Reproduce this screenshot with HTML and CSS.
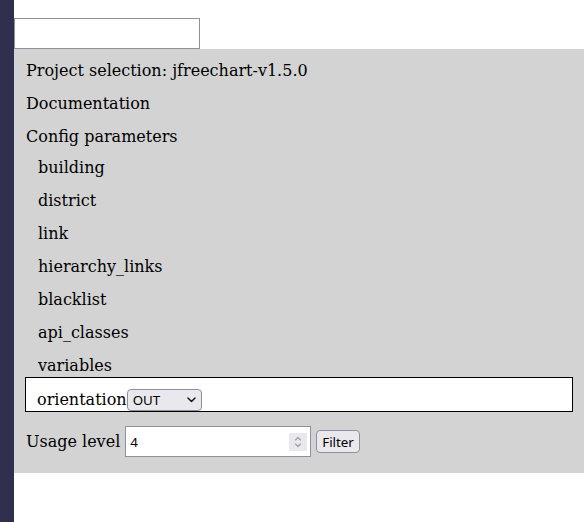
FILE: index.html
```html
<!DOCTYPE html>
<html>
<head>
<meta charset="utf-8">
<link rel="stylesheet" href="styles.css">
</head>
<body>
<div class="layout">
  <div class="sidebar"></div>
  <div class="main">
    <input class="search field" type="text">
    <div class="panel">
      <div class="item">Project selection: jfreechart-v1.5.0</div>
      <div class="item">Documentation</div>
      <div class="item header">Config parameters</div>
      <div class="sub">building</div>
      <div class="sub">district</div>
      <div class="sub">link</div>
      <div class="sub">hierarchy_links</div>
      <div class="sub">blacklist</div>
      <div class="sub">api_classes</div>
      <div class="sub">variables</div>
      <div class="box"><span class="label">orientation</span><span class="select-wrap"><select class="orient"><option>OUT</option><option>IN</option><option>BOTH</option></select><svg class="chev" width="9" height="6" viewBox="0 0 9 6" aria-hidden="true"><path d="M1 1 L4.5 4.5 L8 1" fill="none" stroke="#1a1a1a" stroke-width="1.5" stroke-linecap="round" stroke-linejoin="round"/></svg></span></div>
      <div class="usage"><span class="label">Usage level</span><span class="num-wrap"><input class="level field" type="text" value="4"><span class="spin" aria-hidden="true"><svg width="18" height="18" viewBox="0 0 18 18"><path d="M6.5 7 L9 4.5 L11.5 7" fill="none" stroke="#9a9aa4" stroke-width="1.1" stroke-linecap="round" stroke-linejoin="round"/><path d="M6.5 11 L9 13.5 L11.5 11" fill="none" stroke="#9a9aa4" stroke-width="1.1" stroke-linecap="round" stroke-linejoin="round"/></svg></span></span><button class="filter">Filter</button></div>
    </div>
  </div>
</div>
</body>
</html>
```
FILE: styles.css
```css
html, body {
  margin: 0;
  padding: 0;
  height: 100%;
}
body {
  font-family: "DejaVu Serif", serif;
  font-size: 16px;
  color: #000;
  background: #fff;
}
.layout {
  display: flex;
  min-height: 100%;
}
.sidebar {
  width: 14px;
  flex: none;
  background: #30304e;
}
.main {
  flex: 1;
  padding: 18px 4px 0 0;
}
.field {
  box-sizing: border-box;
  width: 186px;
  height: 31px;
  margin: 0;
  border: 1px solid #8f8f9d;
  border-radius: 0;
  background: #fff;
  padding: 0 4px;
  font-family: "Noto Sans", sans-serif;
  font-size: 13.33px;
  color: #000;
  outline: none;
}
.search {
  display: block;
}
.panel {
  background: #d3d3d3;
  padding-bottom: 16px;
}
.item {
  padding: 12px 12px 2px;
  line-height: 19px;
}
.item.header {
  padding-bottom: 0;
}
.sub {
  padding: 12px 24px 2px;
  line-height: 19px;
}
.box {
  margin: 0 11px;
  border: 1px solid #000;
  background: #fff;
  padding: 11px 11px 0;
  line-height: 19px;
  display: flex;
  align-items: baseline;
}
.select-wrap {
  position: relative;
  display: inline-block;
}
.orient {
  appearance: none;
  -webkit-appearance: none;
  box-sizing: border-box;
  width: 75px;
  height: 22px;
  margin: 0;
  padding: 0 0 0 5px;
  border: 1px solid #8f8f9d;
  border-radius: 4px;
  background: #e9e9ed;
  font-family: "Noto Sans", sans-serif;
  font-size: 13.33px;
  color: #000;
  vertical-align: baseline;
}
.chev {
  position: absolute;
  left: 60px;
  top: 8px;
  pointer-events: none;
}
.usage {
  padding: 14px 12px 0;
  line-height: 19px;
  display: flex;
  align-items: center;
}
.usage .label {
  margin-right: 5px;
}
.num-wrap {
  position: relative;
  display: inline-block;
  height: 31px;
}
.level {
  display: block;
  padding-left: 4px;
}
.spin {
  position: absolute;
  left: 164px;
  top: 7px;
  width: 18px;
  height: 18px;
  background: #e9e9ed;
  pointer-events: none;
}
.spin svg {
  display: block;
}
.filter {
  box-sizing: border-box;
  margin: 0 0 0 5px;
  height: 23px;
  padding: 0 5px;
  border: 1px solid #8f8f9d;
  border-radius: 4px;
  background: #e9e9ed;
  font-family: "Noto Sans", sans-serif;
  font-size: 13.33px;
  color: #000;
}
```
